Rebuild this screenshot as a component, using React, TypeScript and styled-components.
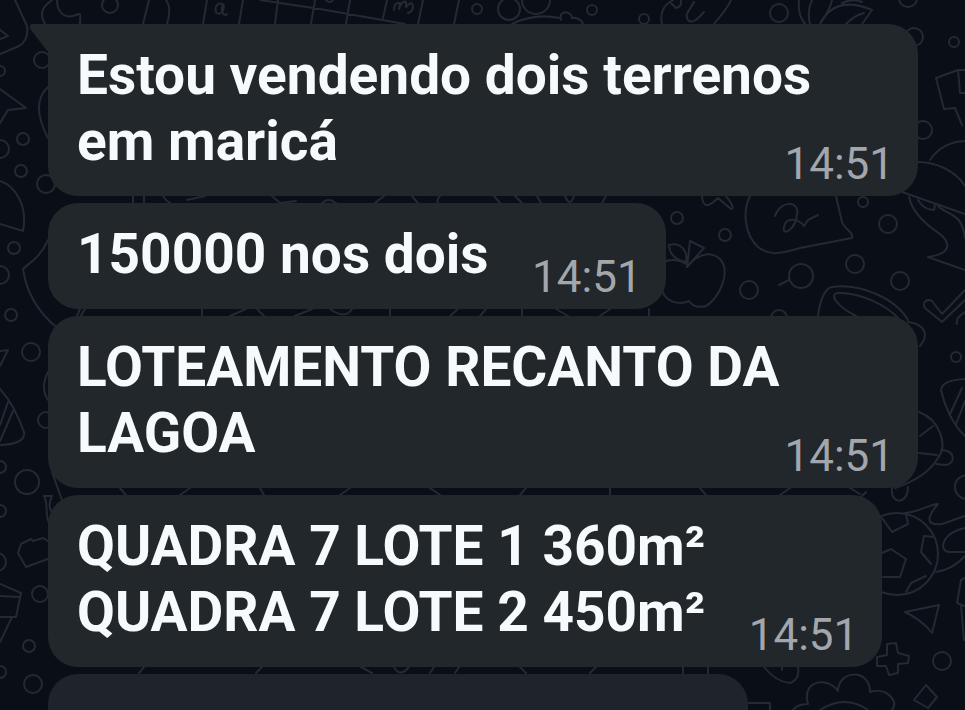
import React from "react";
import styled, { createGlobalStyle } from "styled-components";

const GlobalStyle = createGlobalStyle`
  *, *::before, *::after { box-sizing: border-box; }
  body { margin: 0; background: #0a0e17; }
`;

const Chat = styled.main`
  position: relative;
  height: 100vh;
  overflow: hidden;
  font-family: Roboto, "Liberation Sans", sans-serif;
`;

const Wallpaper = styled.svg`
  position: absolute;
  inset: 0;
  width: 100%;
  height: 100%;
  fill: none;
  stroke: #252932;
  stroke-width: 2;
  stroke-linecap: round;
  stroke-linejoin: round;
`;

const Thread = styled.ol`
  position: relative;
  display: flex;
  flex-direction: column;
  align-items: flex-start;
  gap: 7px;
  margin: 0;
  padding: 24px 47px 0 48px;
  list-style: none;
`;

const Bubble = styled.li<{ $tail?: boolean }>`
  position: relative;
  display: grid;
  max-width: 100%;
  padding: 18px 24px 22px 29px;
  border-radius: ${(p) => (p.$tail ? "0 30px 30px 30px" : "30px")};
  background: #21272b;
`;

const NextBubble = styled.li`
  width: 700px;
  max-width: 100%;
  height: 106px;
  border-radius: 30px;
  background: #1f232b;
`;

const Tail = styled.svg`
  position: absolute;
  top: 0;
  right: 100%;
  width: 20px;
  height: 28px;
  fill: #21272b;
`;

const Text = styled.p`
  grid-area: 1 / 1;
  margin: 0;
  color: #f7fafd;
  font-size: 55px;
  font-weight: 700;
  line-height: 66px;
  white-space: pre-line;
`;

const TimeSpace = styled.span`
  display: inline-block;
  width: 153px;
`;

const Time = styled.time`
  grid-area: 1 / 1;
  place-self: end;
  margin-bottom: -16px;
  color: #a3a6ac;
  font-size: 44px;
  line-height: 52px;
`;

const circles: [number, number, number][] = [
  [110, 5, 8], [477, 9, 5], [509, 9, 11], [536, 0, 14], [592, 10, 5],
  [644, 19, 5], [779, 13, 9], [908, -2, 9], [914, 37, 9], [954, 42, 5],
  [42, 60, 8], [0, 71, 5], [23, 139, 6], [0, 149, 9], [21, 171, 6],
  [46, 184, 9], [14, 248, 6], [0, 275, 9], [11, 315, 6], [31, 352, 9],
  [0, 467, 6], [27, 482, 12], [0, 511, 6], [46, 420, 8], [-3, 562, 9],
  [40, 594, 8], [29, 646, 6], [0, 672, 6], [33, 684, 9], [677, 218, 6],
  [725, 235, 6], [863, 202, 5], [888, 224, 9], [855, 264, 9], [801, 276, 12],
  [749, 290, 9], [900, 281, 9], [779, 318, 8], [923, 130, 9], [956, 357, 5],
  [967, 487, 12], [897, 554, 41], [942, 661, 9],
];

const strokes = [
  // top edge
  "M15 0L27 26Q29 40 19 46L0 54M0 30L8 36L0 39",
  "M45 24C38 12 44 6 52 0M57 0C57 14 66 19 76 15C82 12 80 16 80 24",
  "M143 24L149 0M166 0Q172 8 167 24",
  "M203 24L207 0M239 24L243 0M223 6C220 0 214 6 216 12C220 18 226 8 223 4C220 12 224 17 227 14",
  "M260 0L320 9L405 24M275 24L278 0M311 24L315 0M346 24L350 0M383 18L387 0M326 0Q330 4 333 0",
  "M394 10Q394 2 400 3L399 9Q402 0 406 2L406 7Q412 0 413 6Q413 12 408 13M418 24L423 0M454 24L459 0",
  "M512 24C530 15 545 15 560 18M561 20C558 10 571 10 572 18Q580 17 583 24",
  "M662 24C659 10 666 4 673 0M671 3L676 8Q682 7 681 0M694 2C690 10 684 14 688 20C692 24 697 20 704 12M731 0C728 8 722 14 714 24",
  "M799 0C798 10 800 18 805 24M812 0C808 8 808 16 810 24M832 0C830 10 825 16 820 24M820 24C830 4 848 0 872 10L862 24M846 24Q855 15 864 13M842 3Q852 -2 862 2",
  // left edge
  "M48 87C36 98 36 115 48 138M0 89L26 108L8 110L0 123",
  "M0 181C15 186 28 205 23 231L0 224",
  "M48 240C40 258 30 262 23 269C26 290 36 310 56 327M80 317L85 309M0 351L8 350L0 366",
  "M0 389C10 400 18 415 24 432Q26 444 0 445M8 402L0 425M13 411L0 441",
  "M48 372Q40 388 48 400M52 472L62 500M50 525C44 515 49 505 44 496H52Q46 508 55 516",
  "M48 541L43 538L33 541L31 539L21 544L18 553L26 567L48 559",
  "M0 584L21 593L16 617H0M0 596L20 597M12 617L0 642",
  // speech cloud, apple and cup
  "M702 196C703 208 708 208 718 198L731 209Q736 209 726 196",
  "M750 196C742 212 745 235 758 247C770 256 780 254 800 248L852 238C854 232 845 230 842 222L836 196",
  "M775 216C780 200 800 200 797 215C795 230 782 237 784 227C786 216 799 219 804 226L808 220L818 215",
  "M663 262Q675 257 686 264M687 267C696 255 710 250 720 259C732 272 718 300 706 306Q694 309 689 301C680 305 666 303 662 290",
  "M669 245C680 242 688 250 686 262Q670 259 669 245ZM690 241L704 248L687 267Z",
  "M779 285L789 280M818 316C820 300 825 288 832 287C860 283 895 298 908 320M856 316C838 307 828 294 838 293C858 292 885 304 898 318M908 322C924 324 930 334 920 346",
  // right edge
  "M965 70L958 70L936 78L944 109L955 108L962 125M958 70L960 93H965",
  "M930 160Q942 142 965 141M918 162C935 162 955 170 965 186M902 192L965 214",
  "M909 197C912 212 925 224 940 234C952 244 950 254 928 257L965 270M918 200Q924 210 934 210L935 205M938 206C948 216 962 212 965 238",
  "M965 290L942 314L932 301C926 298 921 304 926 309L942 322L965 300M957 324Q955 318 965 312",
  "M965 379Q942 380 941 390C944 404 952 424 965 436M962 388L950 414M965 401L956 424",
  "M919 412C940 420 948 445 938 458C928 475 910 483 895 488M933 426L920 436M919 453L937 455M941 450C957 450 955 465 945 465L936 464M892 488C890 505 908 505 908 487M860 498L866 492",
  "M891 549L906 559L900 577H883M891 549L882 553M882 518L892 532L908 524L906 514M934 537L924 536L921 552L931 564M906 592L911 583L926 576",
  "M905 513C920 512 930 504 938 504C926 518 926 526 942 524L965 516M965 528C941 533 938 552 950 552H965M936 572Q952 570 965 556",
  "M905 612L939 605L932 633Q922 620 905 612ZM965 578L961 580L957 603L965 606M961 605L964 640",
  // bottom edge
  "M887 644L896 643L898 653L909 656L908 663L898 664L898 673L889 675L886 666L877 666L877 657L887 655Z",
  "M926 685L937 697L928 708L914 700Z",
  "M793 710Q798 704 808 704C801 680 828 676 838 691C838 670 870 668 870 692C885 687 900 700 892 710M820 710Q845 694 868 710",
  "M764 667Q776 682 790 683Q800 680 798 667M782 667V670M748 703H770V710M683 667V674M708 667V674",
  // between bubbles
  "M133 196V203M144 196V203M163 196Q166 201 170 203M187 200L205 196M272 196L280 203L296 201M322 203Q328 197 336 203M375 203L384 196M412 196L418 203M440 196Q436 200 438 203M494 196L500 203M515 196L522 203M537 196L541 203M565 196Q570 208 574 196M602 203L606 196",
  "M80 309L77 316M202 309V316M230 316L246 309M257 309L264 316M295 316L312 309M330 309Q345 320 352 309M390 316V309M450 316L458 309M480 316L486 309M522 309V316M556 309L568 316M600 316L610 309M649 309V316",
  "M120 488L126 495M180 495L190 488M260 488L264 495M340 495L350 488M430 488L440 495M520 495L526 488M610 488V495M700 488L706 495M780 495L790 488M850 488L860 494",
  "M139 673L144 667M256 673L262 667M361 667L372 673M394 667Q400 678 409 667M430 673L434 667M455 673L459 667M520 667L526 673M590 673L596 667",
];

type Message = { text: string; time: string };

const messages: Message[] = [
  { text: "Estou vendendo dois terrenos em maricá", time: "14:51" },
  { text: "150000 nos dois", time: "14:51" },
  { text: "LOTEAMENTO RECANTO DA LAGOA", time: "14:51" },
  { text: "QUADRA 7 LOTE 1 360m²\nQUADRA 7 LOTE 2 450m²", time: "14:51" },
];

export default function App() {
  return (
    <>
      <GlobalStyle />
      <Chat>
        <Wallpaper viewBox="0 0 965 710" preserveAspectRatio="xMidYMid slice" aria-hidden="true">
          {circles.map(([cx, cy, r]) => (
            <circle key={`${cx},${cy}`} cx={cx} cy={cy} r={r} />
          ))}
          {strokes.map((d) => (
            <path key={d} d={d} />
          ))}
        </Wallpaper>
        <Thread>
          {messages.map((message, index) => (
            <Bubble key={message.text} $tail={index === 0}>
              {index === 0 && (
                <Tail viewBox="0 0 20 28" aria-hidden="true">
                  <path d="M20 0H4Q0 1 3 6L20 28Z" />
                </Tail>
              )}
              <Text>
                {message.text}
                <TimeSpace />
              </Text>
              <Time dateTime={message.time}>{message.time}</Time>
            </Bubble>
          ))}
          <NextBubble />
        </Thread>
      </Chat>
    </>
  );
}
